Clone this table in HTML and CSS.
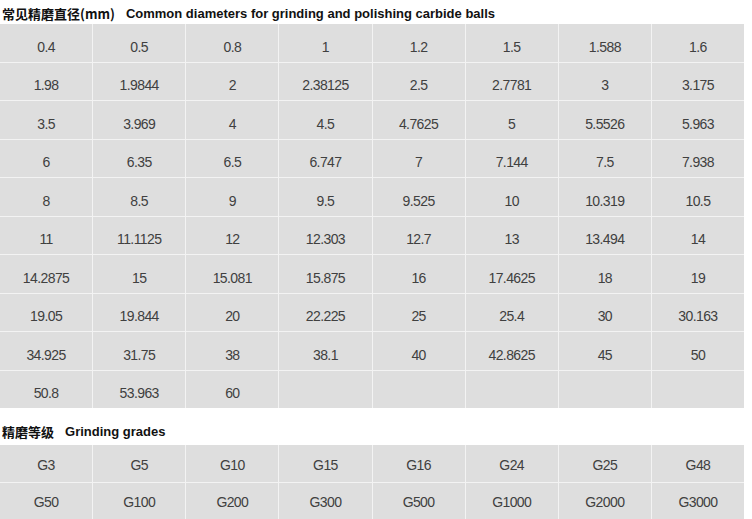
FILE: index.html
```html
<!DOCTYPE html>
<html lang="zh">
<head>
<meta charset="utf-8">
<link rel="stylesheet" href="styles.css">
</head>
<body>
<div class="page">
  <h2 class="title title-first"><span class="cn">常见精磨直径(mm)</span><span class="en">Common diameters for grinding and polishing carbide balls</span></h2>
  <div class="grid sizes">
    <div class="cell">0.4</div><div class="cell">0.5</div><div class="cell">0.8</div><div class="cell">1</div><div class="cell">1.2</div><div class="cell">1.5</div><div class="cell">1.588</div><div class="cell">1.6</div>
    <div class="cell">1.98</div><div class="cell">1.9844</div><div class="cell">2</div><div class="cell">2.38125</div><div class="cell">2.5</div><div class="cell">2.7781</div><div class="cell">3</div><div class="cell">3.175</div>
    <div class="cell">3.5</div><div class="cell">3.969</div><div class="cell">4</div><div class="cell">4.5</div><div class="cell">4.7625</div><div class="cell">5</div><div class="cell">5.5526</div><div class="cell">5.963</div>
    <div class="cell">6</div><div class="cell">6.35</div><div class="cell">6.5</div><div class="cell">6.747</div><div class="cell">7</div><div class="cell">7.144</div><div class="cell">7.5</div><div class="cell">7.938</div>
    <div class="cell">8</div><div class="cell">8.5</div><div class="cell">9</div><div class="cell">9.5</div><div class="cell">9.525</div><div class="cell">10</div><div class="cell">10.319</div><div class="cell">10.5</div>
    <div class="cell">11</div><div class="cell">11.1125</div><div class="cell">12</div><div class="cell">12.303</div><div class="cell">12.7</div><div class="cell">13</div><div class="cell">13.494</div><div class="cell">14</div>
    <div class="cell">14.2875</div><div class="cell">15</div><div class="cell">15.081</div><div class="cell">15.875</div><div class="cell">16</div><div class="cell">17.4625</div><div class="cell">18</div><div class="cell">19</div>
    <div class="cell">19.05</div><div class="cell">19.844</div><div class="cell">20</div><div class="cell">22.225</div><div class="cell">25</div><div class="cell">25.4</div><div class="cell">30</div><div class="cell">30.163</div>
    <div class="cell">34.925</div><div class="cell">31.75</div><div class="cell">38</div><div class="cell">38.1</div><div class="cell">40</div><div class="cell">42.8625</div><div class="cell">45</div><div class="cell">50</div>
    <div class="cell">50.8</div><div class="cell">53.963</div><div class="cell">60</div><div class="cell"></div><div class="cell"></div><div class="cell"></div><div class="cell"></div><div class="cell"></div>
  </div>
  <h2 class="title title-second"><span class="cn">精磨等级</span><span class="en">Grinding grades</span></h2>
  <div class="grid grades">
    <div class="cell">G3</div><div class="cell">G5</div><div class="cell">G10</div><div class="cell">G15</div><div class="cell">G16</div><div class="cell">G24</div><div class="cell">G25</div><div class="cell">G48</div>
    <div class="cell">G50</div><div class="cell">G100</div><div class="cell">G200</div><div class="cell">G300</div><div class="cell">G500</div><div class="cell">G1000</div><div class="cell">G2000</div><div class="cell">G3000</div>
  </div>
</div>
</body>
</html>
```

FILE: styles.css
```css
html, body {
  margin: 0;
  padding: 0;
  background: #ffffff;
}

.page {
  width: 744px;
  font-family: "Liberation Sans", Arial, "Noto Sans CJK SC", sans-serif;
}

.title {
  margin: 0;
  font-size: 13px;
  font-weight: bold;
  color: #111;
  display: flex;
  align-items: center;
  padding-left: 2px;
  white-space: nowrap;
}

.title .cn {
  font-family: "Noto Sans CJK SC", sans-serif;
  font-weight: 700;
}

.title .en {
  margin-left: 11px;
}

.title-first {
  height: 24px;
  padding-top: 2px;
  box-sizing: border-box;
}

.title-second {
  height: 37px;
  padding-top: 10px;
  box-sizing: border-box;
}

.grid {
  display: grid;
  grid-template-columns: repeat(8, 1fr);
  gap: 1px;
  background: #f3f3f3;
}

.sizes {
  grid-auto-rows: 37.5px;
}

.grades {
  grid-auto-rows: 36.5px;
}

.cell {
  background: #dedede;
  color: #404040;
  font-size: 14px;
  letter-spacing: -0.6px;
  display: flex;
  align-items: center;
  justify-content: center;
}

.sizes .cell {
  padding-top: 8px;
}

.grades .cell {
  padding-top: 3px;
}
```
